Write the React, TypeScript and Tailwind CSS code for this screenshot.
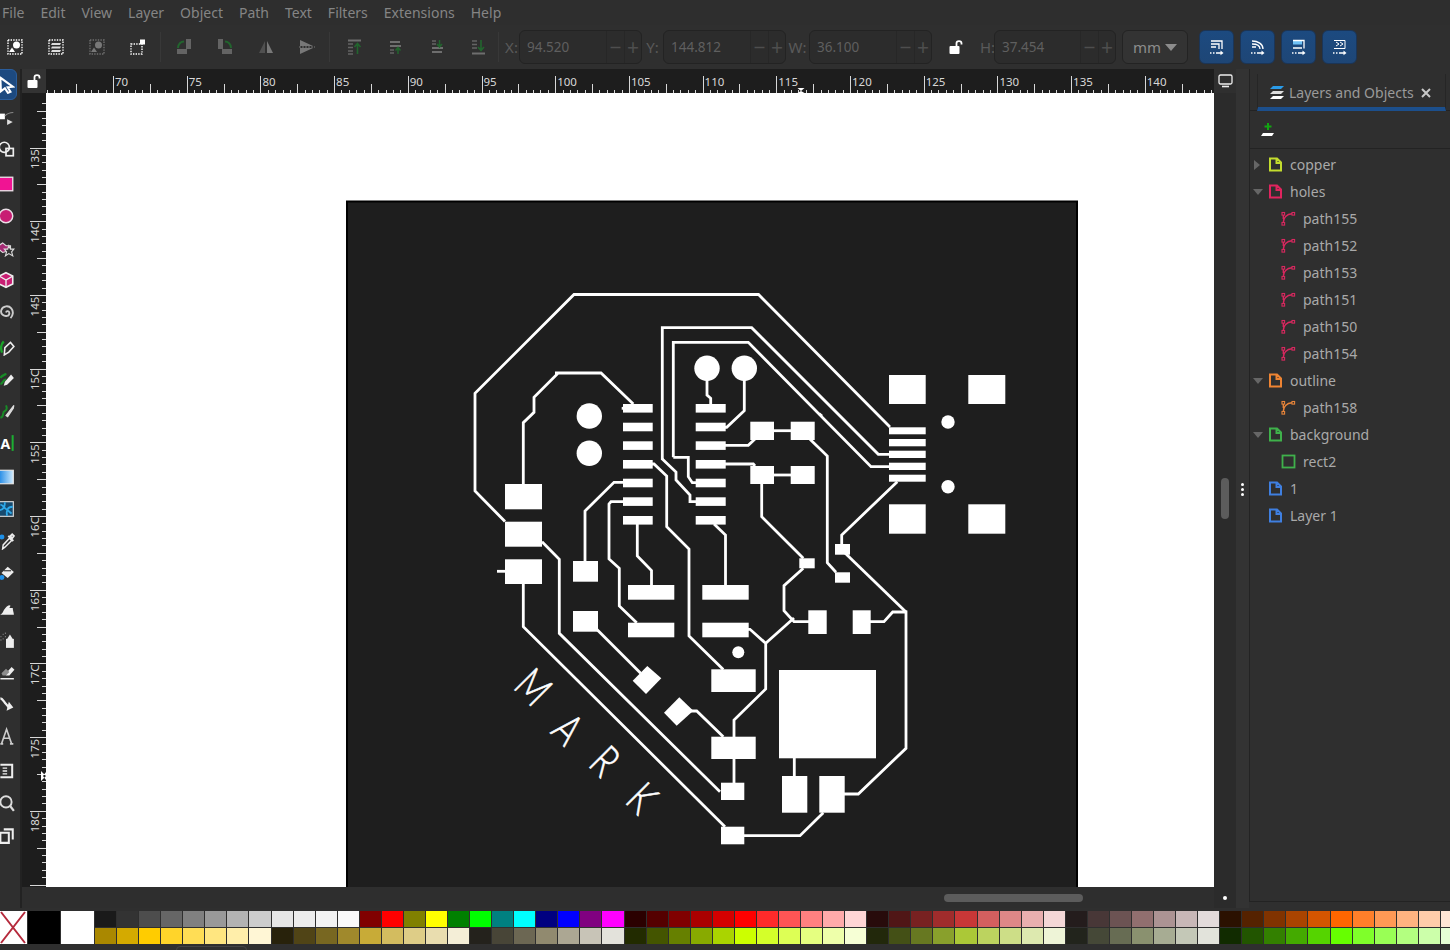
import React from 'react';

const MENU = ['File', 'Edit', 'View', 'Layer', 'Object', 'Path', 'Text', 'Filters', 'Extensions', 'Help'];

const TOP_ROW = [
  '#1a1a1a', '#333333', '#4d4d4d', '#666666', '#808080', '#999999', '#b3b3b3', '#cccccc', '#e6e6e6', '#ececec', '#f2f2f2', '#f9f9f9',
  '#800000', '#ff0000', '#808000', '#ffff00', '#008000', '#00ff00', '#008080', '#00ffff', '#000080', '#0000ff', '#800080', '#ff00ff',
  '#2b0000', '#550000', '#800000', '#aa0000', '#d40000', '#ff0000', '#ff2a2a', '#ff5555', '#ff8080', '#ffaaaa', '#ffd5d5',
  '#280b0b', '#501616', '#782121', '#a02c2c', '#c83737', '#d35f5f', '#de8787', '#e9afaf', '#f4d7d7',
  '#241c1c', '#483737', '#6c5353', '#916f6f', '#ac9393', '#c8b7b7', '#e3dbdb',
  '#2b1100', '#552200', '#803300', '#aa4400', '#d45500', '#ff6600', '#ff7f2a', '#ff9955', '#ffb380', '#ffccaa', '#ffe6d5',
];

const BOTTOM_ROW = [
  '#aa8800', '#d4aa00', '#ffcc00', '#ffd42a', '#ffdd55', '#ffe680', '#ffeeaa', '#fff6d5',
  '#28220b', '#504416', '#786721', '#a0892c', '#c8ab37', '#d3bc5f', '#decd87', '#e9ddaf', '#f4eed7',
  '#24221c', '#484537', '#6c6753', '#918a6f', '#aca793', '#c8c4b7', '#e3e2db',
  '#222b00', '#445500', '#668000', '#88aa00', '#aad400', '#ccff00', '#d4ff2a', '#ddff55', '#e5ff80', '#eeffaa', '#f6ffd5',
  '#22280b', '#445016', '#677821', '#89a02c', '#abc837', '#bcd35f', '#cdde87', '#dde9af', '#eef4d7',
  '#22241c', '#454837', '#676c53', '#8a916f', '#a7ac93', '#c4c8b7', '#e2e3db',
  '#112b00', '#225500', '#338000', '#44aa00', '#55d400', '#66ff00', '#7fff2a', '#99ff55', '#b3ff80', '#ccffaa', '#e5ffd5',
];

const TREE = [
  { name: 'copper', color: '#c3dc2e', kind: 'layer', tri: 'closed' },
  { name: 'holes', color: '#e0245e', kind: 'layer', tri: 'open' },
  { name: 'path155', color: '#d8285f', kind: 'path' },
  { name: 'path152', color: '#d8285f', kind: 'path' },
  { name: 'path153', color: '#d8285f', kind: 'path' },
  { name: 'path151', color: '#d8285f', kind: 'path' },
  { name: 'path150', color: '#d8285f', kind: 'path' },
  { name: 'path154', color: '#d8285f', kind: 'path' },
  { name: 'outline', color: '#ee8433', kind: 'layer', tri: 'open' },
  { name: 'path158', color: '#e8853a', kind: 'path' },
  { name: 'background', color: '#3fb14b', kind: 'layer', tri: 'open' },
  { name: 'rect2', color: '#3fb14b', kind: 'rect' },
  { name: '1', color: '#3f7fe0', kind: 'layer' },
  { name: 'Layer 1', color: '#3f7fe0', kind: 'layer' },
];

// board artwork, in screen pixels
const TRACES = [
  'M505 521.5L475 491V393.3L574 294.5H758.5L890 427',
  'M523.3 484V422.7L534 412.3V397.3L558.3 373H555H601L633.3 404',
  'M621.7 408.3H626',
  'M707 380V395L710.7 398.3V404',
  'M744.3 380V410.7L726.7 427.3H724',
  'M725 445.3H748.3L755 439',
  'M774 430.7H791',
  'M810 439.3L827.3 456V562.7L836 572.3',
  'M725 464H753.3L755 466',
  'M774 475H791',
  'M761.7 484V516.7L803.3 558.3',
  'M803.3 568.3L784 585.7V610.7L794 621.7H810',
  'M870 621.7H884L892.7 612H906V748.3L858.3 794H844',
  'M794.3 758V776',
  'M823.3 812.7L800 835.7H744',
  'M725 826.7L523.3 626.7V584',
  'M497 571.3H506',
  'M542 541.7L559.3 559.3V633.3L720 791.7',
  'M585 562V511L614 482.3H624',
  'M596.7 629.3L640.7 673.3',
  'M691 711H696.7L723.3 736.7',
  'M734 759V783',
  'M734 737V720L765.7 689V643.3L750 629.3H748',
  'M765.7 643.3L794 618',
  'M725.5 586V535L714 524',
  'M637.3 524V556L651.5 570.5V586',
  'M636.7 622.7L619.3 606V568.3L609 559V504L611 501.7H624',
  'M652 464H654L666.7 476V526.7L689 549V636L723.3 669.5',
  'M662.3 460V327.7H751.7L878.3 454.3H890',
  'M662.3 459L676 472V480L690 495V501.7H696',
  'M673.3 457.3V342.3H748.3L871 466.7H890',
  'M673.3 457.3H688.3V476.7L692.3 482.7H696',
  'M897.3 481.7L841.7 535V545',
  'M845 553L906 612',
  'M819 413.5L822 416',
];

const PADS = [
  [505, 484, 37, 25.3], [505, 521.7, 37, 25], [505, 559.3, 37, 24.7],
  ...[404, 422.7, 441.3, 460, 478.7, 497.3, 516].flatMap(y => [[623, y, 29.7, 8.6], [695.7, y, 30, 8.6]]),
  [750.3, 421.7, 23.7, 18.3], [790.7, 421.7, 24, 18.3], [750.3, 466, 23.7, 18], [790.7, 466, 24, 18],
  [835, 572.3, 15, 10.4], [835, 544, 15, 10.7], [799.3, 558.3, 15.4, 10],
  [808.3, 610.3, 18.4, 23.7], [852.7, 610.3, 18, 23.7],
  [779, 670, 97, 88.3], [782, 776, 25.3, 36.7], [819.3, 776, 25.4, 36.7],
  [721, 826.7, 23.3, 17.6], [721, 782.7, 23.3, 17.3],
  [573, 561, 25, 20.7], [573, 611, 25, 20.7],
  [628, 585, 46.3, 14.7], [628, 622.7, 46.3, 14.6], [702.3, 585, 46.4, 14.7], [702.3, 622.7, 46.4, 14.6],
  [711.3, 669.3, 44.4, 22.7], [711.3, 736.7, 44.4, 22.3],
  [889, 427.3, 36.7, 7], [889, 439, 36.7, 7.3], [889, 450.7, 36.7, 7.3], [889, 462.7, 36.7, 7.3], [889, 474.7, 36.7, 7],
  [889, 375, 36.7, 29], [968.3, 375, 37, 29], [889, 504.3, 36.7, 29.4], [968.3, 504.3, 37, 29.4],
];

const HOLES = [
  [589.3, 416, 12.7], [589.3, 453.3, 12.7], [707, 368.3, 12.7], [744.3, 368.3, 12.7],
  [948, 422, 6.7], [948, 486.7, 6.7], [738.3, 652.3, 6],
];

const LETTERS: [string, number, number][] = [
  ['M', 534.5, 686], ['A', 569, 728], ['R', 606, 760], ['K', 643, 797],
];

const Doc = ({ color }: { color: string }) => (
  <svg width="15" height="15" viewBox="0 0 15 15" fill="none" stroke={color} strokeWidth="2"><path d="M2 1.5H9L13 5.5V13.5H2ZM8.5 2V6H12.5" /></svg>
);

const PathIcon = ({ color }: { color: string }) => (
  <svg width="15" height="15" viewBox="0 0 15 15" fill="none" stroke={color} strokeWidth="1.1"><rect x="1" y="1.5" width="2.6" height="2.6" /><rect x="11" y="1.5" width="2.6" height="2.6" /><rect x="1" y="11.5" width="2.6" height="2.6" /><path d="M2.3 11.5C2.3 7 5.5 3 11 2.8M2.3 4.1V8" strokeWidth="1.4" /></svg>
);

const ToolIcon = ({ children }: { children: React.ReactNode }) => (
  <div className="h-[32px] flex items-center">
    <svg width="18" height="18" viewBox="0 0 16 16" fill="none" className="ml-[-3px] shrink-0">{children}</svg>
  </div>
);

const BarIcon = ({ children }: { children: React.ReactNode }) => (
  <div className="w-[41px] flex justify-center shrink-0">
    <svg width="18" height="18" viewBox="0 0 18 18" fill="none">{children}</svg>
  </div>
);

const Dotted = ({ d = 'M2 2H16V16H2Z', o = 1 }: { d?: string; o?: number }) => (
  <path d={d} stroke="#fff" strokeWidth="1.4" strokeDasharray="1.4 1.2" opacity={o} />
);

const NumField = ({ label, value, labelW, width }: { label: string; value: string; labelW: string; width: string }) => (
  <>
    <span className={`${labelW} text-[15px] text-[#5a5a5a] text-center shrink-0`}>{label}</span>
    <div className={`${width} h-[34px] shrink-0 flex items-center rounded-md border border-[#232323] bg-[#2c2c2c] text-[#5f5f5f]`}>
      <span className="flex-1 pl-[7px] text-[13.5px] whitespace-nowrap overflow-hidden">{value}</span>
      <span className="w-[18px] h-full flex items-center justify-center border-l border-[#272727] text-[21px] leading-none text-[#4e4e4e]">−</span>
      <span className="w-[17px] h-full flex items-center justify-center border-l border-[#272727] text-[21px] leading-none text-[#4e4e4e]">+</span>
    </div>
  </>
);

const LockOpen = ({ size = 16 }: { size?: number }) => (
  <svg width={size} height={size} viewBox="0 0 16 16" fill="none"><rect x="1.5" y="7" width="10" height="8" rx="1" fill="#fff" /><path d="M8.5 7V4.2C8.5 1.4 13.5 1.4 13.5 4.2V5.5" stroke="#fff" strokeWidth="1.8" /></svg>
);

const SnapButton = ({ children }: { children: React.ReactNode }) => (
  <div className="w-[35px] h-[34px] rounded-md border border-[#1b3557] bg-gradient-to-b from-[#1c4a80] to-[#1e4676] flex items-center justify-center">
    <svg width="18" height="18" viewBox="0 0 18 18" fill="none" stroke="#fff" strokeWidth="1.3">
      {children}
      <path d="M2 15H3.5M5 15H6.5M8 15H14" strokeWidth="1.6" />
      <path d="M12.5 12.6L15.5 15L12.5 17.2Z" fill="#fff" strokeWidth="0" />
    </svg>
  </div>
);

const HRuler = () => {
  const ticks = [];
  for (let i = -9; i < 150; i++) {
    const x = Math.round(113 + i * 7.37) + 0.5;
    const top = i % 10 === 0 ? 76 : i % 5 === 0 ? 84 : 90;
    ticks.push(<line key={i} x1={x} x2={x} y1={top} y2={93} stroke="#d8d8d8" strokeWidth="1" />);
  }
  const labels = [];
  for (let n = 70; n <= 140; n += 5) {
    labels.push(<text key={n} x={115 + ((n - 70) / 5) * 73.7} y={86} fill="#d8d8d8" fontSize="11.5" fontFamily="'Noto Sans', sans-serif">{n}</text>);
  }
  return (
    <svg width="1168" height="24" viewBox="46 69 1168 24" className="block">
      {ticks}{labels}
      <path d="M797.5 88H804.5L801 91L804.5 93H797.5L801 91Z" fill="#fff" />
    </svg>
  );
};

const VRuler = () => {
  const ticks = [];
  for (let i = -6; i < 110; i++) {
    const y = Math.round(147.5 + i * 7.37) + 0.5;
    const left = i % 10 === 0 ? 30 : i % 5 === 0 ? 37 : 42;
    ticks.push(<line key={i} x1={left} x2={46} y1={y} y2={y} stroke="#d8d8d8" strokeWidth="1" />);
  }
  const labels = [];
  for (let n = 135; n <= 180; n += 5) {
    const y = 149 + ((n - 135) / 5) * 73.7;
    labels.push(<text key={n} transform={`translate(39 ${y + 20}) rotate(-90)`} fill="#d8d8d8" fontSize="11.5" fontFamily="'Noto Sans', sans-serif">{n % 10 === 0 ? `${n / 10}C` : n}</text>);
  }
  return (
    <svg width="24" height="794" viewBox="22 93 24 794" className="block">
      {ticks}{labels}
      <path d="M41 771V781L46 776ZM46 772V780L43 776Z" fill="#fff" />
    </svg>
  );
};

const Board = () => (
  <svg width="1168" height="794" viewBox="46 93 1168 794" className="block">
    <rect x="347" y="201.5" width="730" height="700" fill="#1e1e1e" stroke="#000" strokeWidth="2" />
    <g fill="none" stroke="#fff" strokeWidth="2.8">
      {TRACES.map((d, i) => <path key={i} d={d} />)}
    </g>
    <g fill="#fff">
      {PADS.map(([x, y, w, h], i) => <rect key={i} x={x} y={y} width={w} height={h} />)}
      {HOLES.map(([cx, cy, r], i) => <circle key={i} cx={cx} cy={cy} r={r} />)}
      <path d="M632.7 680.7L647.3 666L661.3 678.3L646 694Z" />
      <path d="M664 712.7L679.3 697.3L693.3 710.7L676.7 725.7Z" />
    </g>
    {LETTERS.map(([c, x, y]) => (
      <text
        key={c}
        transform={`translate(${x} ${y}) rotate(45) scale(0.74 1)`}
        textAnchor="middle"
        dominantBaseline="central"
        fill="#fff"
        stroke="#fff"
        strokeWidth="0.7"
        fontSize="44"
        fontWeight="300"
        fontFamily="Lato, sans-serif"
      >{c}</text>
    ))}
  </svg>
);

const Tools = () => (
  <div className="w-[20px] shrink-0 overflow-hidden bg-[#2f2f2f] relative">
    <div className="absolute left-[-6px] top-0 w-[23px] h-[31px] rounded-md border border-[#2a5d9c] bg-[#1d4a80]" />
    <div className="relative flex flex-col">
      <ToolIcon><path d="M3 1.5L14 9.5L9.5 10L12 14L9.7 15L7 10.8L3.5 13.5Z" fill="#1d4a80" stroke="#fff" strokeWidth="1.8" /></ToolIcon>
      <ToolIcon><rect x="2" y="5" width="5" height="5" fill="#fff" /><path d="M7 7C9 5 12 4 14.5 4" stroke="#888" /><path d="M9 10V15L14 12.5Z" fill="#ddd" /></ToolIcon>
      <ToolIcon><circle cx="6.5" cy="6.5" r="4.5" stroke="#eee" strokeWidth="1.5" /><rect x="8" y="7.5" width="6.5" height="6.5" stroke="#eee" strokeWidth="1.5" /></ToolIcon>
      <div className="h-[3px]" />
      <ToolIcon><rect x="2" y="2" width="12" height="12" fill="#f01493" stroke="#eadfe6" strokeWidth="1.2" /></ToolIcon>
      <ToolIcon><circle cx="8" cy="8" r="6" fill="#c81e73" stroke="#eadfe6" strokeWidth="1.3" /></ToolIcon>
      <ToolIcon><path d="M5 3.5L8 6H12V10L5 12L1.5 9V6Z" fill="#a42a73" stroke="#ddd" /><path d="M10.5 6L12 9H15L13 11.5L14 15L10.5 13L7.5 15L8.5 11.5L6.5 9H9.5Z" fill="#333" stroke="#ddd" /></ToolIcon>
      <ToolIcon><path d="M8 1.5L14 4.5V11.5L8 14.5L2 11.5V4.5Z" fill="#c81e73" stroke="#eee" strokeWidth="1.4" /><path d="M2 4.5L8 8L14 4.5M8 8V14.5" stroke="#eee" strokeWidth="1.2" /></ToolIcon>
      <ToolIcon><path d="M8 8.5C8.5 6.5 11 7 11 9C11 11.5 7.5 12.5 5 10.5C2.5 8.5 3.5 3.5 8 3C12 2.5 14.5 6 14 9.5C13.8 11 13 12.5 12 13.5" stroke="#ccc" strokeWidth="1.7" /></ToolIcon>
      <div className="h-[3px]" />
      <ToolIcon><path d="M4.5 13C3 9 4 5 6 3" stroke="#1aa329" strokeWidth="2" /><path d="M6.5 15L7 8.5L12 4L15 7.5L10.5 12.5Z" fill="#2f2f2f" stroke="#eee" strokeWidth="1.4" /></ToolIcon>
      <ToolIcon><path d="M3 12.5C6 12 5 8 8 8.5M3 7C5 4 7 5 8 3" stroke="#188a27" strokeWidth="2" /><path d="M6 14L7 10.5L12.5 4L15 7L9 13Z" fill="#eee" /></ToolIcon>
      <ToolIcon><path d="M3 14C7 13 4 9 7 8C9 7 9 5 8 3" stroke="#188a27" strokeWidth="1.8" /><path d="M8 12L15 3L14.5 5.5L9.5 13Z" fill="#ddd" stroke="#ddd" /></ToolIcon>
      <ToolIcon><text x="3" y="13.5" fill="#fff" fontSize="12.5" fontWeight="700" fontFamily="'Noto Sans', sans-serif">A</text><rect x="13" y="1" width="1.8" height="14" fill="#1cae32" /></ToolIcon>
      <div className="h-[2px]" />
      <ToolIcon><defs><linearGradient id="tg" x1="0" x2="1" y1="0" y2="0"><stop offset="0" stopColor="#1e88e5" /><stop offset="1" stopColor="#cfeafc" /></linearGradient></defs><rect x="1.5" y="2" width="13" height="12" fill="url(#tg)" stroke="#e8e8e8" /></ToolIcon>
      <ToolIcon><rect x="1.5" y="1.5" width="13" height="13" fill="#174a6e" stroke="#ddd" /><path d="M2 9C6 9 7 5 7 2M14 6C9 6 8 10 9 14M3 4C6 5 6 7 8 8C10 9 11 11 13 12" stroke="#2ea8e8" strokeWidth="1.6" /></ToolIcon>
      <ToolIcon><circle cx="4.4" cy="4.5" r="2.2" fill="#1e90e8" /><path d="M5 15L5.5 11.5L11 5.5L13 7.5L7 13.5Z" stroke="#eee" strokeWidth="1.3" /><path d="M10 3.5L14.5 8M12 3.5L13.5 2L15 3.5L13.5 5.5Z" stroke="#eee" strokeWidth="1.6" /></ToolIcon>
      <ToolIcon><circle cx="4.4" cy="12" r="2.2" fill="#1e90e8" /><path d="M4 8L9.5 2.5L15 7L9.5 12.5Z" fill="#eee" /><path d="M6 6H12.5" stroke="#333" /></ToolIcon>
      <div className="h-[3px]" />
      <ToolIcon><path d="M2.7 14C5.5 13 5.5 10 7.5 8C9.5 5.5 11 5 12 6L11 8L14 8C14 10 15 12 15 14H2.7Z" fill="#eee" /></ToolIcon>
      <ToolIcon><rect x="8" y="7" width="7" height="8" fill="#eee" /><path d="M9 7L11.5 3L14 7Z" fill="#eee" /><path d="M3 5H4M5 3H6M5 7H6M7 5H8M3 8H4M7 2H8" stroke="#777" strokeWidth="1.3" /></ToolIcon>
      <ToolIcon><path d="M8 9L13 3.5L15.5 6L11 11H8Z" fill="#eee" /><path d="M4 9L8 5L11 8L8 11H5Z" fill="#8c8c8c" /><path d="M3 14H15" stroke="#eee" strokeWidth="1.3" /></ToolIcon>
      <ToolIcon><path d="M3 3C5 3 6 6 8 8L10.5 11" stroke="#eee" strokeWidth="2" /><path d="M8.5 14L14.5 11L10.5 6Z" fill="#eee" /></ToolIcon>
      <ToolIcon><path d="M4 15L8.5 2L13 15M6 10H11M3 15H5.5M11.5 15H14.5" stroke="#ccc" strokeWidth="1.4" /></ToolIcon>
      <div className="h-[3px]" />
      <ToolIcon><path d="M3 2.5H13.5V13.5H3" stroke="#eee" strokeWidth="1.8" /><path d="M5 5.5H9M5 8H9M5 10.5H9" stroke="#eee" strokeWidth="1.2" /></ToolIcon>
      <ToolIcon><circle cx="8" cy="7" r="5" stroke="#ddd" strokeWidth="1.7" /><path d="M11.5 10.5L15 15" stroke="#ddd" strokeWidth="2" /></ToolIcon>
      <ToolIcon><path d="M3 6H10.5V15H3ZM6 3H14V12" stroke="#eee" strokeWidth="1.8" /></ToolIcon>
    </div>
  </div>
);

const Toolbar = () => (
  <div className="h-[44px] shrink-0 flex items-center bg-[#2f2f2f]">
    <div className="flex items-center ml-[-6px] shrink-0">
      <BarIcon><Dotted /><circle cx="10.5" cy="7" r="3.5" fill="#fff" /><path d="M3 14L6 9.5L9 14Z" fill="#fff" /></BarIcon>
      <BarIcon><Dotted /><path d="M5 5H14L13 7H4ZM5 8.5H14L13 10.5H4ZM5 12H14L13 14H4Z" fill="#ddd" /></BarIcon>
      <BarIcon><Dotted o={0.3} /><g opacity="0.35"><circle cx="10.5" cy="7" r="3.5" fill="#fff" /><path d="M3 14L6 9.5L9 14Z" fill="#fff" /></g></BarIcon>
      <BarIcon><Dotted d="M2 6H13V16H2Z" /><rect x="11" y="1.5" width="5" height="5" fill="#fff" /></BarIcon>
    </div>
    <div className="w-px h-[30px] bg-[#383838] ml-[2px] shrink-0" />
    <div className="flex items-center opacity-60 ml-[2px] shrink-0">
      <BarIcon><rect x="2" y="11" width="10" height="5" fill="#888" /><rect x="11" y="1" width="5" height="10" fill="#888" /><path d="M3 10C3 6 6 3.5 9 3.5" stroke="#1a8a2e" strokeWidth="2" /></BarIcon>
      <BarIcon><rect x="6" y="11" width="10" height="5" fill="#888" /><rect x="2" y="1" width="5" height="10" fill="#888" /><path d="M15 10C15 6 12 3.5 9 3.5" stroke="#1a8a2e" strokeWidth="2" /></BarIcon>
      <BarIcon><path d="M8 3V15H2Z" fill="#666" /><path d="M10 3V15H16Z" fill="#aaa" /></BarIcon>
      <BarIcon><path d="M2 2V8H15Z" fill="#aaa" /><path d="M2 16V10H15Z" fill="#aaa" /><path d="M1 9H17" stroke="#aaa" strokeDasharray="2 1" /></BarIcon>
    </div>
    <div className="w-px h-[30px] bg-[#383838] ml-[2px] shrink-0" />
    <div className="flex items-center opacity-60 ml-[4px] shrink-0">
      <BarIcon><path d="M2 2.5H15" stroke="#999" strokeWidth="2" /><path d="M2 6H7M2 9.5H7M2 13H7M2 16H7" stroke="#888" strokeWidth="1.6" /><path d="M11.5 16V6M8.5 9L11.5 5.5L14.5 9" stroke="#1a8a2e" strokeWidth="1.6" /></BarIcon>
      <BarIcon><path d="M3 4H13M3 8H14" stroke="#999" strokeWidth="1.8" /><path d="M3 12H7M3 15H7" stroke="#888" strokeWidth="1.6" /><path d="M11 16V10M8.5 12.5L11 9.5L13.5 12.5" stroke="#1a8a2e" strokeWidth="1.5" /></BarIcon>
      <BarIcon><path d="M4 3H8M4 6H8" stroke="#888" strokeWidth="1.6" /><path d="M4 10H15M4 14H14" stroke="#999" strokeWidth="1.8" /><path d="M11.5 2V8M9 6L11.5 9L14 6" stroke="#1a8a2e" strokeWidth="1.5" /></BarIcon>
      <BarIcon><path d="M3 15.5H16" stroke="#999" strokeWidth="2" /><path d="M3 3H8M3 6.5H8M3 10H8" stroke="#888" strokeWidth="1.6" /><path d="M12 2V12M9 9L12 12.5L15 9" stroke="#1a8a2e" strokeWidth="1.6" /></BarIcon>
    </div>
    <div className="w-px h-[30px] bg-[#383838] shrink-0" />
    <div className="flex items-center ml-[5px] shrink-0">
      <NumField label="X:" value="94.520" labelW="w-[15px]" width="w-[123px]" />
      <NumField label="Y:" value="144.812" labelW="w-[21px]" width="w-[123px]" />
      <NumField label="W:" value="36.100" labelW="w-[23px]" width="w-[123px]" />
      <div className="w-[48px] flex justify-center shrink-0"><LockOpen /></div>
      <NumField label="H:" value="37.454" labelW="w-[14px]" width="w-[122px]" />
      <div className="ml-[6px] w-[66px] h-[34px] shrink-0 rounded-md border border-[#232323] bg-[#333] flex items-center justify-center gap-[4px] text-[15px] text-[#8c8c8c]">
        mm
        <svg width="12" height="7" viewBox="0 0 12 7"><path d="M0 0H12L6 7Z" fill="#8c8c8c" /></svg>
      </div>
      <div className="ml-[11px] flex gap-[6px]">
        <SnapButton><path d="M3 3H14V11M3 6H11V11M3 9H8" /></SnapButton>
        <SnapButton><path d="M3 3C9 3 14 6 14 11M3 6C8 6 11 8 11 11M3 9H7" /></SnapButton>
        <SnapButton><rect x="3" y="2.5" width="9" height="4" fill="#6fc1f5" strokeWidth="0" /><path d="M3 2.5H14V10.5M3 10H12" /></SnapButton>
        <SnapButton><path d="M3 2.5H14V10.5H3M5 4L8 6L5 8M9 4L12 6L9 8" strokeWidth="1" /></SnapButton>
      </div>
    </div>
  </div>
);

const LayersPanel = () => (
  <div className="w-[201px] h-[833px] shrink-0 border-l border-b border-[#232323] bg-[#2f2f2f] flex flex-col">
    <div className="h-[42px] pl-[7px] pt-[5px] border-b border-[#232323] shrink-0">
      <div className="w-[189px] h-[37px] pt-[4px] border-x border-[#262626] border-b-[4px] border-b-[#1c4f8c] flex items-center pl-[11px] gap-[3px]">
        <svg width="17" height="16" viewBox="0 0 17 16"><path d="M4 1H15L12 4H1Z" fill="#2a9be8" /><path d="M4 6H15L12 9H1Z" fill="#ddd" /><path d="M4 11H15L12 14H1Z" fill="#fff" /></svg>
        <span className="text-[14px] text-[#9a9a9a] whitespace-nowrap">Layers and Objects</span>
        <svg width="10" height="10" viewBox="0 0 10 10" className="ml-[4px]"><path d="M1 1L9 9M9 1L1 9" stroke="#c8c8c8" strokeWidth="2" /></svg>
      </div>
    </div>
    <div className="h-[38px] border-b border-[#232323] flex items-center pl-[10px] shrink-0">
      <svg width="16" height="16" viewBox="0 0 16 16"><path d="M8 1V8M4.5 4.5H11.5" stroke="#12a512" strokeWidth="2" /><path d="M3 11H14L12 14H1Z" fill="#fff" /></svg>
    </div>
    <div className="flex flex-col pt-[2px]">
      {TREE.map(row => (
        <div key={row.name} className={`h-[27px] flex items-center text-[14px] text-[#a9a9a9] ${row.kind === 'layer' ? '' : 'pl-[31px] gap-[7px]'}`}>
          {row.kind === 'layer' && (
            <span className="w-[18px] pl-[3px] shrink-0 flex">
              {row.tri === 'closed' && <svg width="8" height="10" viewBox="0 0 8 10"><path d="M1 0L7 5L1 10Z" fill="#666" /></svg>}
              {row.tri === 'open' && <svg width="10" height="8" viewBox="0 0 10 8"><path d="M0 1H10L5 7Z" fill="#666" /></svg>}
            </span>
          )}
          {row.kind === 'layer' && <span className="mr-[7px] flex"><Doc color={row.color} /></span>}
          {row.kind === 'path' && <PathIcon color={row.color} />}
          {row.kind === 'rect' && <svg width="15" height="15" viewBox="0 0 15 15" fill="none"><rect x="1.5" y="1.5" width="12" height="12" stroke={row.color} strokeWidth="1.8" /></svg>}
          <span>{row.name}</span>
        </div>
      ))}
    </div>
  </div>
);

const Palette = () => (
  <div className="h-[38px] shrink-0 flex items-start pt-[3px] bg-[#2f2f2f] overflow-hidden">
    <svg width="27" height="33" viewBox="0 0 27 33" className="shrink-0 bg-white"><path d="M1 1L25 32M25 1L1 32" stroke="#b52a3c" strokeWidth="2" /></svg>
    <div className="w-[32px] h-[33px] ml-[1px] bg-black shrink-0" />
    <div className="w-[33px] h-[33px] ml-[1px] bg-white shrink-0" />
    <div className="ml-[1px] grid grid-cols-[repeat(62,21.07px)] grid-rows-[16px_16px] gap-[1px] shrink-0">
      {TOP_ROW.map((c, i) => <div key={`t${i}`} style={{ backgroundColor: c }} />)}
      {BOTTOM_ROW.map((c, i) => <div key={`b${i}`} style={{ backgroundColor: c }} />)}
    </div>
  </div>
);

export default function App() {
  return (
    <div className="w-[1450px] h-[950px] overflow-hidden flex flex-col bg-[#2f2f2f] font-['Noto_Sans',sans-serif]">
      <div className="h-[25px] shrink-0 flex items-center gap-[16px] pl-[2px] text-[14px] text-[#858585] bg-[#2e2e2e]">
        {MENU.map(m => <span key={m}>{m}</span>)}
      </div>
      <Toolbar />
      <div className="h-[839px] shrink-0 flex">
        <Tools />
        <div className="w-[2px] shrink-0 bg-[#222]" />
        <div className="w-[1192px] shrink-0 flex flex-col">
          <div className="h-[24px] flex">
            <div className="w-[24px] bg-[#333] flex items-center justify-center"><LockOpen /></div>
            <div className="flex-1 bg-[#1d1d1d]"><HRuler /></div>
          </div>
          <div className="h-[794px] flex">
            <div className="w-[24px] bg-[#1d1d1d]"><VRuler /></div>
            <div className="flex-1 bg-white overflow-hidden"><Board /></div>
          </div>
          <div className="h-[21px] flex items-center justify-start pl-[922px] bg-[#2e2e2e]">
            <div className="w-[139px] h-[8px] rounded-full bg-[#5c5c5c]" />
          </div>
        </div>
        <div className="w-[22px] shrink-0 flex flex-col bg-[#2b2b2b]">
          <div className="h-[24px] flex items-center justify-center bg-[#2f2f2f]">
            <svg width="15" height="14" viewBox="0 0 15 14" fill="none"><rect x="1" y="1" width="13" height="9" rx="1.5" stroke="#eee" strokeWidth="1.3" /><path d="M4 12.5H11" stroke="#eee" strokeWidth="1.6" /></svg>
          </div>
          <div className="flex-1 flex flex-col items-center pt-[385px]">
            <div className="w-[8px] h-[41px] rounded-full bg-[#5c5c5c]" />
          </div>
          <div className="h-[21px] flex items-center justify-center">
            <div className="w-[4px] h-[4px] rounded-full bg-white" />
          </div>
        </div>
        <div className="w-[13px] shrink-0 flex flex-col items-center gap-[2px] pt-[414px] bg-[#333]">
          <div className="w-[3px] h-[3px] rounded-full bg-white" />
          <div className="w-[3px] h-[3px] rounded-full bg-white" />
          <div className="w-[3px] h-[3px] rounded-full bg-white" />
        </div>
        <LayersPanel />
      </div>
      <Palette />
      <div className="h-[4px] shrink-0 pl-[176px] overflow-hidden bg-[#2f2f2f]">
        <div className="w-[71px] h-[8px] rounded-md border border-[#444]" />
      </div>
    </div>
  );
}
